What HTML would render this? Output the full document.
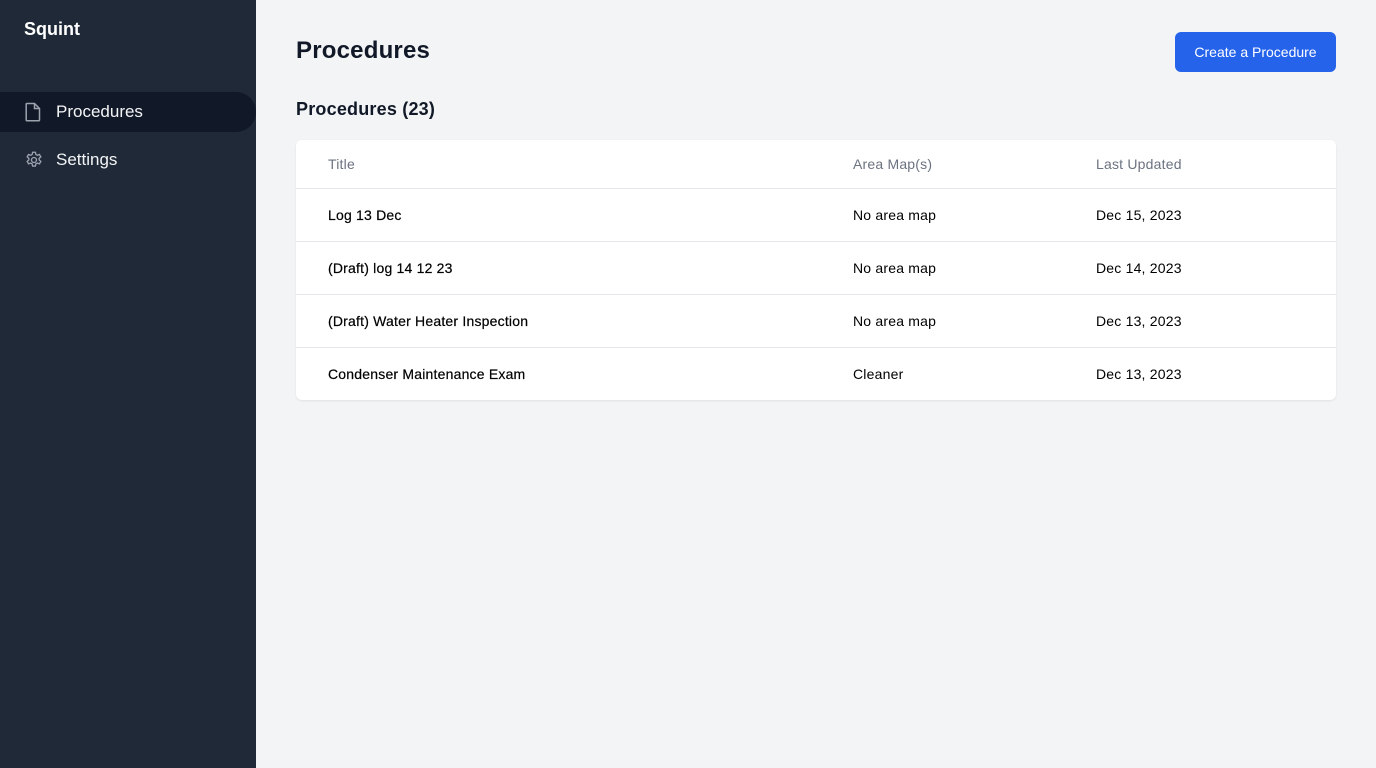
<!DOCTYPE html>
<html><head><style>
*{box-sizing:border-box;margin:0;padding:0}
body{width:1376px;height:768px;background:#f3f4f6;font-family:"Liberation Sans",sans-serif;position:relative;overflow:hidden}
.side{position:absolute;left:0;top:0;width:256px;height:768px;background:#1f2937}
.logo{position:absolute;left:24px;top:19px;color:#fff;font-weight:bold;font-size:18px}
.nav{position:absolute;left:0;width:256px;height:40px;color:#f3f4f6;font-size:17px}
.nav svg{position:absolute;left:24px;top:10px}
.nav span{position:absolute;left:56px;top:10px}
.active{background:#111827;border-radius:0 20px 20px 0}
h1{position:absolute;left:296px;top:37px;font-size:24px;color:#111827;letter-spacing:.2px}
h2{position:absolute;left:296px;top:99px;font-size:18px;color:#111827;letter-spacing:.2px}
.btn{position:absolute;left:1175px;top:32px;width:161px;height:40px;background:#2563eb;color:#fff;border-radius:6px;font-size:14px;display:flex;align-items:center;justify-content:center}
.card{position:absolute;left:296px;top:140px;width:1040px;height:260px;background:#fff;border-radius:6px;box-shadow:0 1px 2px rgba(0,0,0,.08)}
.row{position:relative;height:53px;border-top:1px solid #e5e7eb;font-size:14px;color:#000;letter-spacing:.2px}
.row span{position:absolute;top:18px}
.row .a{font-weight:500;-webkit-text-stroke:.2px #000}
.hd{height:48px;border:none;color:#6b7280}
.hd .a{font-weight:normal;-webkit-text-stroke:0}
.hd span{top:16px}
.a{left:32px}.b{left:557px}.c{left:800px}
</style></head><body>
<div class="side">
<div class="logo">Squint</div>
<div class="nav active" style="top:92px"><svg width="18" height="20" viewBox="0 0 18 20" fill="none" stroke="#9ca3af" stroke-width="1.5"><path d="M3 1.5h7.5l5 5V18a.8.8 0 0 1-.8.8H3a.8.8 0 0 1-.8-.8V2.3a.8.8 0 0 1 .8-.8z"/><path d="M10.5 1.5v5h5"/></svg><span>Procedures</span></div>
<div class="nav" style="top:140px"><svg width="20" height="20" viewBox="0 0 24 24" fill="none" stroke="#9ca3af" stroke-width="1.6"><path d="M10.3 2.7h3.4l.5 2.6 1.8 1 2.5-.9 1.7 2.9-2 1.7v2l2 1.7-1.7 2.9-2.5-.9-1.8 1-.5 2.6h-3.4l-.5-2.6-1.8-1-2.5.9-1.7-2.9 2-1.7v-2l-2-1.7 1.7-2.9 2.5.9 1.8-1z"/><circle cx="12" cy="12" r="3"/></svg><span>Settings</span></div>
</div>
<h1>Procedures</h1>
<div class="btn">Create a Procedure</div>
<h2>Procedures (23)</h2>
<div class="card">
<div class="row hd"><span class="a">Title</span><span class="b">Area Map(s)</span><span class="c">Last Updated</span></div>
<div class="row"><span class="a">Log 13 Dec</span><span class="b">No area map</span><span class="c">Dec 15, 2023</span></div>
<div class="row"><span class="a">(Draft) log 14 12 23</span><span class="b">No area map</span><span class="c">Dec 14, 2023</span></div>
<div class="row"><span class="a">(Draft) Water Heater Inspection</span><span class="b">No area map</span><span class="c">Dec 13, 2023</span></div>
<div class="row"><span class="a">Condenser Maintenance Exam</span><span class="b">Cleaner</span><span class="c">Dec 13, 2023</span></div>
</div>
</body></html>
